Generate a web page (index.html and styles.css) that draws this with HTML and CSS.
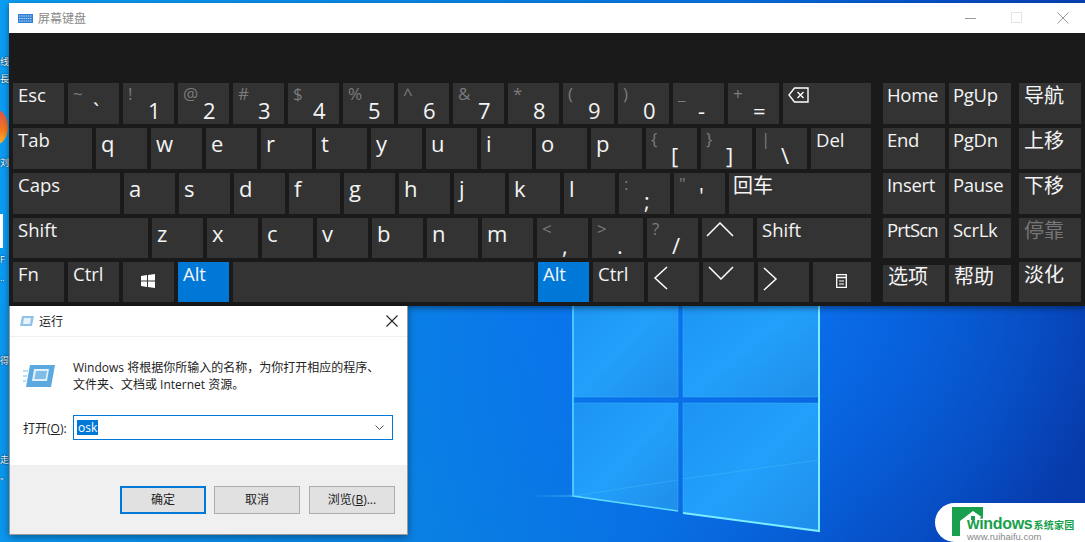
FILE: index.html
```html
<!DOCTYPE html>
<html lang="zh-CN">
<head>
    <meta charset="UTF-8">
    <title>屏幕键盘</title>
    <link rel="stylesheet" href="styles.css">
</head>
<body>
<div class="desktop">
    <!-- wallpaper logo -->
    <svg class="wallpaper" width="1085" height="542" viewBox="0 0 1085 542">
        <defs>
            <linearGradient id="pane" x1="0" y1="0" x2="1" y2="1">
                <stop offset="0" stop-color="#1c93f2"/>
                <stop offset="0.5" stop-color="#22a0fb"/>
                <stop offset="1" stop-color="#1f8eea"/>
            </linearGradient>
            <linearGradient id="glow" x1="0" y1="0" x2="1" y2="0">
                <stop offset="0" stop-color="#6fe4ff" stop-opacity="0"/>
                <stop offset="1" stop-color="#6fe4ff" stop-opacity="0.3"/>
            </linearGradient>
        </defs>
        <rect x="530" y="495" width="43" height="2" fill="url(#glow)"/>
        <polygon points="573,290 678,290 678,397 573,397" fill="url(#pane)"/>
        <polygon points="683,290 819,290 819,397 683,397" fill="url(#pane)"/>
        <polygon points="573,403 678,403 678,511 573,496" fill="url(#pane)"/>
        <polygon points="683,403 819,403 819,531 683,513" fill="url(#pane)"/>
        <polyline points="573,290 573,496 678,511" class="edge"/>
        <polyline points="819,290 819,531 683,513" class="edge bright"/>
        <path d="M573 397H678V290M683 290V397H819M573 403H678V511M683 513V403H819" class="edge thin"/>
        <path d="M573 496L678 480M683 479L819 460" class="edge thin"/>
    </svg>

    <!-- bits of desktop icons showing next to the windows -->
    <div class="icon-strip">
        <span class="frag frag-a">线</span>
        <span class="frag frag-b">長</span>
        <span class="blob"></span>
        <span class="frag frag-c">刘</span>
        <span class="page"></span>
        <span class="frag frag-d">F</span>
        <span class="frag frag-e">..</span>
        <span class="frag frag-f">得</span>
        <span class="frag frag-g">走</span>
        <span class="frag frag-h">"</span>
    </div>

    <div class="osk">
        <div class="osk-title">
            <svg class="osk-icon" width="15" height="9" viewBox="0 0 15 9">
                <rect width="15" height="9" fill="#2f7fd6"/>
                <path d="M1 2h13M1 4.5h13M1 7h13" stroke="#bcd9f5" stroke-width="1" stroke-dasharray="1.5 .7"/>
            </svg>
            <span class="osk-name">屏幕键盘</span>
            <span class="win-btns">
                <svg width="12" height="12" viewBox="0 0 12 12"><path d="M0 6.5h11" stroke="#999"/></svg>
                <svg width="12" height="12" viewBox="0 0 12 12"><rect x=".5" y=".5" width="10" height="10" fill="none" stroke="#e4e4e4"/></svg>
                <svg width="12" height="12" viewBox="0 0 12 12"><path d="M.5.5l11 11M11.5.5l-11 11" stroke="#999"/></svg>
            </span>
        </div>
        <div class="osk-body">
            <div class="main-keys">
                <div class="row">
                    <div class="key">Esc</div>
                    <div class="key sym"><i>~</i><b>`</b></div>
                    <div class="key sym"><i>!</i><b>1</b></div>
                    <div class="key sym"><i>@</i><b>2</b></div>
                    <div class="key sym"><i>#</i><b>3</b></div>
                    <div class="key sym"><i>$</i><b>4</b></div>
                    <div class="key sym"><i>%</i><b>5</b></div>
                    <div class="key sym"><i>^</i><b>6</b></div>
                    <div class="key sym"><i>&amp;</i><b>7</b></div>
                    <div class="key sym"><i>*</i><b>8</b></div>
                    <div class="key sym"><i>(</i><b>9</b></div>
                    <div class="key sym"><i>)</i><b>0</b></div>
                    <div class="key sym"><i>_</i><b>-</b></div>
                    <div class="key sym"><i>+</i><b>=</b></div>
                    <div class="key w88">
                        <svg class="ico-bksp" width="21" height="16" viewBox="0 0 21 16"><path d="M6.5 1H20V15H6.5L1 8zM9.500 5l6 6M15.500 5l-6 6" fill="none" stroke="#fff" stroke-width="1.400"/></svg>
                    </div>
                </div>
                <div class="row">
                    <div class="key w79">Tab</div>
                    <div class="key char">q</div>
                    <div class="key char">w</div>
                    <div class="key char">e</div>
                    <div class="key char">r</div>
                    <div class="key char">t</div>
                    <div class="key char">y</div>
                    <div class="key char">u</div>
                    <div class="key char">i</div>
                    <div class="key char">o</div>
                    <div class="key char">p</div>
                    <div class="key sym"><i>{</i><b>[</b></div>
                    <div class="key sym"><i>}</i><b>]</b></div>
                    <div class="key sym"><i>|</i><b>\</b></div>
                    <div class="key w60">Del</div>
                </div>
                <div class="row">
                    <div class="key w107">Caps</div>
                    <div class="key char">a</div>
                    <div class="key char">s</div>
                    <div class="key char">d</div>
                    <div class="key char">f</div>
                    <div class="key char">g</div>
                    <div class="key char">h</div>
                    <div class="key char">j</div>
                    <div class="key char">k</div>
                    <div class="key char">l</div>
                    <div class="key sym"><i>:</i><b>;</b></div>
                    <div class="key sym"><i>"</i><b class="mid">'</b></div>
                    <div class="key w142 cjk">回车</div>
                </div>
                <div class="row low">
                    <div class="key w135">Shift</div>
                    <div class="key char">z</div>
                    <div class="key char">x</div>
                    <div class="key char">c</div>
                    <div class="key char">v</div>
                    <div class="key char">b</div>
                    <div class="key char">n</div>
                    <div class="key char">m</div>
                    <div class="key sym"><i>&lt;</i><b>,</b></div>
                    <div class="key sym"><i>&gt;</i><b>.</b></div>
                    <div class="key sym"><i>?</i><b>/</b></div>
                    <div class="key">
                        <svg class="ico-up" width="28" height="15" viewBox="0 0 28 15"><path d="M1 14L14 1l13 13" class="arrow"/></svg>
                    </div>
                    <div class="key w114">Shift</div>
                </div>
                <div class="row low">
                    <div class="key">Fn</div>
                    <div class="key">Ctrl</div>
                    <div class="key">
                        <svg class="ico-win" width="14" height="14" viewBox="0 0 14 14"><path d="M0 2l6-.9V6.500H0zM7 1l7-1V6.500H7zM0 7.500h6v5.400l-6-.9zM7 7.500h7V14l-7-1z" fill="#fff"/></svg>
                    </div>
                    <div class="key on">Alt</div>
                    <div class="key w301"></div>
                    <div class="key on">Alt</div>
                    <div class="key">Ctrl</div>
                    <div class="key">
                        <svg class="ico-left" width="15" height="24" viewBox="0 0 15 24"><path d="M14 1L2 12l12 11" class="arrow"/></svg>
                    </div>
                    <div class="key">
                        <svg class="ico-down" width="26" height="14" viewBox="0 0 26 14"><path d="M1 1l12 12L25 1" class="arrow"/></svg>
                    </div>
                    <div class="key">
                        <svg class="ico-right" width="15" height="24" viewBox="0 0 15 24"><path d="M1 1l12 11L1 23" class="arrow"/></svg>
                    </div>
                    <div class="key w58">
                        <svg class="ico-menu" width="11" height="14" viewBox="0 0 11 14"><path d="M.7.7h9.600v12.600H.7zM.7 3.500h9.600" fill="none" stroke="#fff" stroke-width="1.300"/><path d="M3 7h5M3 10h5" stroke="#fff" stroke-width="1.200"/></svg>
                    </div>
                </div>
            </div>
            <div class="nav-keys">
                <div class="row">
                    <div class="key w62">Home</div>
                    <div class="key w62">PgUp</div>
                    <div class="key w62 side cjk">导航</div>
                </div>
                <div class="row">
                    <div class="key w62">End</div>
                    <div class="key w62">PgDn</div>
                    <div class="key w62 side cjk">上移</div>
                </div>
                <div class="row">
                    <div class="key w62">Insert</div>
                    <div class="key w62">Pause</div>
                    <div class="key w62 side cjk">下移</div>
                </div>
                <div class="row low">
                    <div class="key w62 tight">PrtScn</div>
                    <div class="key w62">ScrLk</div>
                    <div class="key w62 side cjk dim">停靠</div>
                </div>
                <div class="row low">
                    <div class="key w62 short cjk">选项</div>
                    <div class="key w62 short cjk">帮助</div>
                    <div class="key w62 side cjk">淡化</div>
                </div>
            </div>
        </div>
    </div>

    <div class="run">
        <div class="run-title">
            <svg width="16" height="12" viewBox="0 0 16 12">
                <path d="M3 1h12l-2 10H1z" fill="#8fc3e8"/>
                <path d="M5 3h7l-1 6H4z" fill="#e6f3fb"/>
            </svg>
            <span>运行</span>
            <svg class="run-close" width="12" height="12" viewBox="0 0 12 12"><path d="M.5.5l11 11M11.500.5l-11 11" stroke="#222" stroke-width="1.100"/></svg>
        </div>
        <div class="run-body">
            <div class="run-info">
                <svg width="32" height="24" viewBox="0 0 32 24">
                    <path d="M7 1h25l-4 22H3z" fill="#5ba9de"/>
                    <path d="M11 5h15l-2 12H9z" fill="#dff0fb"/>
                    <path d="M13 7h11l-1.500 8H11.500z" fill="#7fbce6"/>
                    <path d="M0 7h5M0 12h4M0 17h3" stroke="#a9d3ef" stroke-width="1.500"/>
                </svg>
                <p>Windows 将根据你所输入的名称，为你打开相应的程序、<br>文件夹、文档或 Internet 资源。</p>
            </div>
            <div class="run-open">
                <label>打开(<u>O</u>):</label>
                <div class="run-input">
                    <span class="picked">osk</span>
                    <svg width="9" height="5" viewBox="0 0 9 5"><path d="M.5.5l4 4 4-4" fill="none" stroke="#555"/></svg>
                </div>
            </div>
        </div>
        <div class="run-foot">
            <div class="btn default">确定</div>
            <div class="btn cancel">取消</div>
            <div class="btn">浏览(<u>B</u>)...</div>
        </div>
    </div>

    <div class="mark">
        <svg class="mark-logo" width="32" height="29" viewBox="0 0 32 29">
            <path d="M0 0H31V15H8V29H0z" fill="#18a04c"/>
            <path d="M8 29V14L21 4l10 7v5H14v13z" fill="#fff"/>
            <path d="M19 9h4v4h-4z" fill="#18a04c"/>
        </svg>
        <div class="mark-text">
            <div class="mark-name">windows<span>系统家园</span></div>
            <div class="mark-url">www.ruihaifu.com</div>
        </div>
    </div>
</div>
</body>
</html>
```

FILE: styles.css
```css
body {
    margin: 0;
    font-family: "Open Sans", "Noto Sans CJK SC", sans-serif;
}
.desktop {
    position: relative;
    width: 1085px;
    height: 542px;
    overflow: hidden;
    background:
        radial-gradient(420px 300px at 720px 300px, #0a72f0 0%, rgba(10, 114, 240, 0) 100%),
        linear-gradient(100deg, #0b9cf2 0%, #0a84e4 40%, #0871e2 62%, #0650c8 80%, #0738a8 100%);
}
.wallpaper {
    position: absolute;
    left: 0;
    top: 0;
}
.edge {
    fill: none;
    stroke: #5edcff;
    stroke-width: 1.5;
}
.edge.bright {
    stroke: #7cecff;
    stroke-width: 2;
}
.edge.thin {
    stroke: #4cc4fb;
    stroke-width: 1;
    opacity: .35;
}

.icon-strip {
    position: absolute;
    left: 0;
    top: 0;
    width: 9px;
    height: 542px;
}
.frag {
    position: absolute;
    left: 0;
    color: #fff;
    font-size: 9px;
    line-height: 12px;
    text-shadow: 0 0 2px #000;
}
.frag-a { top: 56px; }
.frag-b { top: 73px; }
.frag-c { top: 157px; }
.frag-d { top: 254px; }
.frag-e { top: 272px; }
.frag-f { top: 355px; }
.frag-g { top: 454px; }
.frag-h { top: 476px; }
.blob {
    position: absolute;
    left: -14px;
    top: 110px;
    width: 22px;
    height: 34px;
    border-radius: 50%;
    background: linear-gradient(#d9534f, #f57a1f 60%, #f7b32b);
}
.page {
    position: absolute;
    left: 0;
    top: 214px;
    width: 3px;
    height: 34px;
    background: #fff;
}

/* on-screen keyboard window */
.osk {
    position: absolute;
    left: 9px;
    top: 3px;
    width: 1076px;
    height: 303px;
    background: #1a1a1a;
    box-shadow: 0 2px 6px rgba(0, 0, 0, .45);
}
.osk-title {
    display: flex;
    align-items: center;
    height: 30px;
    padding: 0 16px 0 9px;
    background: #fff;
}
.osk-icon {
    margin-right: 5px;
}
.osk-name {
    font-size: 12px;
    color: #8a8a8a;
}
.win-btns {
    display: flex;
    gap: 34px;
    margin-left: auto;
}
.osk-body {
    display: flex;
    gap: 12px;
    padding: 50px 0 0 4px;
}
.main-keys, .nav-keys {
    display: flex;
    flex-direction: column;
    gap: 4px;
}
.row {
    display: flex;
    gap: 4px;
    height: 41px;
}
.row.low {
    height: 40px;
}
.key {
    position: relative;
    box-sizing: border-box;
    width: 51px;
    padding: 2px 0 0 5px;
    background: #333;
    color: #f4f4f4;
    font-size: 18.5px;
    line-height: 20px;
}
.char {
    padding-top: 3px;
    font-size: 22px;
    line-height: 24px;
}
.w58 { width: 58px; }
.w60 { width: 60px; }
.w62 { width: 62px; padding-left: 4px; letter-spacing: -.3px; }
.w79 { width: 79px; }
.w88 { width: 88px; }
.w107 { width: 107px; }
.w114 { width: 114px; }
.w135 { width: 135px; }
.w142 { width: 142px; }
.w301 { width: 301px; }
.tight { letter-spacing: -.8px; }
.cjk {
    padding: 1px 0 0 4px;
    font-size: 20px;
    line-height: 24px;
    letter-spacing: 0;
}
.w62.cjk { padding-left: 5px; }
.dim { color: #777; }
.on { background: #0078d7; }
.short { margin-top: 3px; }
.key.short { padding-top: 0; }
.side { margin-left: 4px; }

.sym i {
    display: block;
    color: #7c7c7c;
    font-style: normal;
    font-size: 17px;
    line-height: 17px;
}
.sym b {
    display: block;
    margin-top: -3px;
    padding-left: 20px;
    font-weight: normal;
    font-size: 22px;
    line-height: 22px;
}
.sym b.mid {
    margin-top: -8px;
}
.arrow {
    fill: none;
    stroke: #fff;
    stroke-width: 1.5;
}
.key svg {
    display: block;
}
.ico-bksp { margin: 2px 0 0 0; }
.ico-up { margin: 2px 0 0 -1px; }
.ico-win { margin: 10px 0 0 13px; }
.ico-left { margin: 2px 0 0 0; }
.ico-down { margin: 2px 0 0 0; }
.ico-right { margin: 3px 0 0 0; }
.ico-menu { margin: 10px 0 0 18px; }

/* run dialog */
.run {
    position: absolute;
    left: 9px;
    top: 306px;
    box-sizing: border-box;
    display: flex;
    flex-direction: column;
    width: 399px;
    height: 229px;
    border: 1px solid #9a9a9a;
    border-top: 0;
    background: #fff;
    color: #222;
    font-size: 12px;
    box-shadow: 0 2px 8px rgba(0, 0, 0, .4);
}
.run-title {
    display: flex;
    align-items: center;
    gap: 4px;
    height: 30px;
    padding: 0 9px 0 9px;
    border-bottom: 1px solid #f0f0f0;
}
.run-close {
    margin-left: auto;
}
.run-body {
    flex: 1;
    padding: 0 13px;
}
.run-info {
    display: flex;
    gap: 18px;
    align-items: center;
    margin: 22px 0 0 0;
}
.run-info p {
    margin: 0;
    line-height: 17px;
}
.run-open {
    display: flex;
    align-items: center;
    gap: 5px;
    margin-top: 22px;
}
.run-open label {
    width: 45px;
}
.run-input {
    box-sizing: border-box;
    display: flex;
    align-items: center;
    justify-content: space-between;
    width: 320px;
    height: 25px;
    padding: 0 8px 0 3px;
    border: 1px solid #0078d7;
}
.picked {
    padding: 0 1px;
    background: #0078d7;
    color: #fff;
    line-height: 15px;
}
.run-foot {
    display: flex;
    justify-content: flex-end;
    gap: 8px;
    height: 69px;
    padding: 21px 12px 0 0;
    box-sizing: border-box;
    background: #f0f0f0;
}
.btn {
    box-sizing: border-box;
    width: 86px;
    height: 28px;
    border: 1px solid #adadad;
    background: #e1e1e1;
    text-align: center;
    line-height: 26px;
}
.btn.default {
    border: 2px solid #0078d7;
    line-height: 24px;
}
.btn.cancel {
    margin-right: 1px;
}

/* site watermark */
.mark {
    position: absolute;
    left: 935px;
    top: 503px;
    display: flex;
    width: 150px;
    height: 39px;
    padding: 4px 0 0 17px;
    box-sizing: border-box;
    border-radius: 20px 0 0 20px;
    background: #fff;
}
.mark-logo {
    flex: none;
}
.mark-text {
    margin-left: -17px;
    padding-top: 9px;
    position: relative;
}
.mark-name {
    display: flex;
    align-items: baseline;
    color: #18a04c;
    font-family: "Liberation Sans", sans-serif;
    font-weight: bold;
    font-size: 16px;
    line-height: 15px;
    letter-spacing: -.3px;
}
.mark-name span {
    margin-left: 1px;
    font-family: "Noto Sans CJK SC", sans-serif;
    font-size: 10px;
    letter-spacing: .3px;
}
.mark-url {
    color: #888;
    font-family: "Liberation Sans", sans-serif;
    font-size: 9.5px;
    line-height: 10px;
}
```
